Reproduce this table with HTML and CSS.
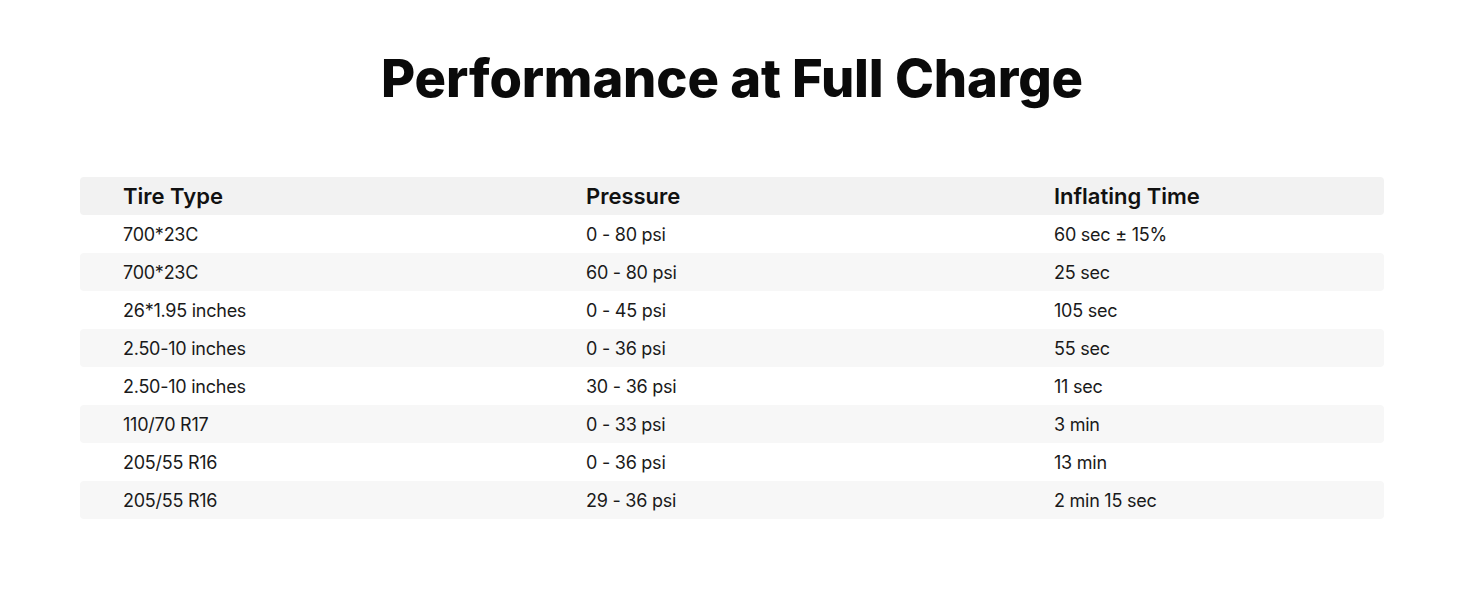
FILE: index.html
```html
<!DOCTYPE html>
<html>
<head>
<meta charset="utf-8">
<link rel="stylesheet" href="styles.css">
</head>
<body>
<main class="page">
  <h1 class="title">Performance at Full Charge</h1>
  <div class="table">
    <div class="row head"><div>Tire Type</div><div>Pressure</div><div>Inflating Time</div></div>
    <div class="row"><div>700*23C</div><div>0 - 80 psi</div><div>60 sec ± 15%</div></div>
    <div class="row alt"><div>700*23C</div><div>60 - 80 psi</div><div>25 sec</div></div>
    <div class="row"><div>26*1.95 inches</div><div>0 - 45 psi</div><div>105 sec</div></div>
    <div class="row alt"><div>2.50-10 inches</div><div>0 - 36 psi</div><div>55 sec</div></div>
    <div class="row"><div>2.50-10 inches</div><div>30 - 36 psi</div><div>11 sec</div></div>
    <div class="row alt"><div>110/70 R17</div><div>0 - 33 psi</div><div>3 min</div></div>
    <div class="row"><div>205/55 R16</div><div>0 - 36 psi</div><div>13 min</div></div>
    <div class="row alt"><div>205/55 R16</div><div>29 - 36 psi</div><div>2 min 15 sec</div></div>
  </div>
</main>
</body>
</html>
```

FILE: styles.css
```css
* { box-sizing: border-box; }
html, body { margin: 0; padding: 0; background: #fff; }
body { font-family: Inter, "Noto Sans", sans-serif; color: #1a1a1a; }
.page { padding: 46px 80px 0; }
.title {
  margin: 0;
  text-align: center;
  font-size: 52.5px;
  line-height: 64px;
  font-weight: 800;
  color: #0a0a0a;
  letter-spacing: -0.15px;
}
.table { margin-top: 67px; display: flex; flex-direction: column; }
.row {
  display: grid;
  grid-template-columns: 463px 468px 1fr;
  height: 38px;
  align-items: center;
  border-radius: 4px;
  font-size: 18px;
  letter-spacing: -0.25px;
  color: #1a1a1a;
}
.row > div { padding-left: 43px; }
.row.head { background: #f2f2f2; font-size: 22px; font-weight: 600; color: #111; letter-spacing: 0; }
.row.alt { background: #f7f7f7; }
```
